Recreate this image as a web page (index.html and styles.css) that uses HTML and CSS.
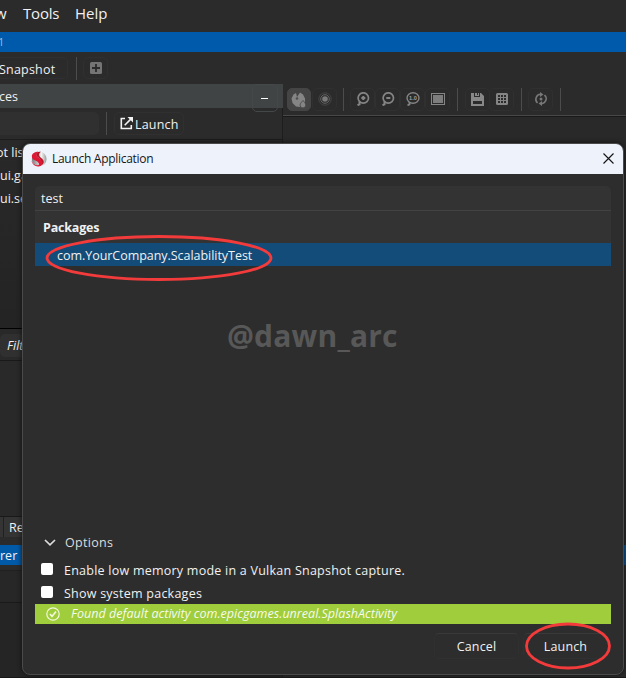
FILE: index.html
```html
<!DOCTYPE html>
<html lang="en">
<head>
<meta charset="utf-8">
<title>Launch Application</title>
<link rel="stylesheet" href="styles.css">
</head>
<body>
<div class="app">
  <nav class="menubar"><span class="menu-view">w</span><span class="menu-tools">Tools</span><span>Help</span></nav>
  <div class="titlebar">1</div>
  <div class="tabs">
    <div class="tab">Snapshot</div>
    <i class="divider"></i>
    <div class="add-tab"><svg width="12" height="12" viewBox="0 0 12 12"><rect width="12" height="12" rx="1.5" fill="#747474"/><path d="M6 2v8M2 6h8" stroke="#2b2b2b" stroke-width="1.8"/></svg></div>
  </div>
  <div class="workspace">
    <aside class="sidebar">
      <div class="panel-title"><span>ces</span><b class="minimize"></b></div>
      <div class="source-tools">
        <div class="source-input"></div><i class="divider"></i>
        <div class="source-launch"><svg width="13" height="13" viewBox="0 0 13 13" fill="none" stroke="#f4f4f4" stroke-width="1.6"><path d="M5 1.5H1.3v10h10V8"/><path d="M4.7 8.2 10.5 2.4"/><path d="M7.5 0H13v5.5z" fill="#f4f4f4" stroke="none"/></svg><span>Launch</span></div>
      </div>
      <div class="source-list"><div class="first">ot list</div><div>ui.ga</div><div>ui.se</div></div>
      <div class="filter"><span>Filter</span></div>
      <div class="filter-list"></div>
      <div class="subtabs"><i></i><span>Re</span></div>
      <div class="selection">rer</div>
      <div class="empty-row"></div>
      <div class="log"></div>
    </aside>
    <main class="viewer">
      <div class="toolbar">
        <div class="tool active"><svg width="16" height="16" viewBox="0 0 16 16"><path d="M2.500 2.500 5 1l1 4 3-4.500L12 2.500l2 4v5L9 15l-4-.5L1.500 11 .5 6.500z" fill="#858585"/><circle cx="6" cy="6.500" r="1.300" fill="#505050"/><path d="M12 8.500s-3 3-3 4.500a2.900 2.900 0 0 0 5.800 0c0-1.500-2.800-4.500-2.800-4.500z" fill="#858585" stroke="#454545" stroke-width=".8"/></svg></div>
        <div class="tool"><svg width="14" height="14" viewBox="0 0 14 14" fill="none" stroke="#4b4b4b"><circle cx="7" cy="7" r="6.2" stroke-width=".8"/><circle cx="7" cy="7" r="4.300" stroke="#656565"/><circle cx="7" cy="7" r="2.800" fill="#7a7a7a" stroke="none"/></svg></div>
        <i class="divider"></i>
        <div class="tool zoom-in"><svg width="14" height="14" viewBox="0 0 14 14" fill="none" stroke="#858585" stroke-width="1.7"><circle cx="7.300" cy="6" r="5.200"/><path d="M3.500 9.500v2.800l-2 .9M7.300 4v4M5.300 6h4" stroke-width="2"/></svg></div>
        <div class="tool"><svg width="14" height="14" viewBox="0 0 14 14" fill="none" stroke="#858585" stroke-width="1.7"><circle cx="7.300" cy="6" r="5.200"/><path d="M3.500 9.500v2.800l-2 .9M5.300 6h4" stroke-width="2"/></svg></div>
        <div class="tool"><svg width="14" height="14" viewBox="0 0 14 14" fill="none" stroke="#858585" stroke-width="1.4"><ellipse cx="7" cy="6" rx="6" ry="5.200"/><path d="M3.500 10v2.500l-2 .8" stroke-width="1.800"/><text class="zoom-label" x="3.100" y="8.100">1.0</text></svg></div>
        <div class="tool"><svg width="14" height="12" viewBox="0 0 14 12"><rect x=".5" y=".5" width="13" height="11" fill="none" stroke="#858585"/><rect x="2" y="2" width="10" height="8" fill="#7d7d7d"/></svg></div>
        <i class="divider fit-divider"></i>
        <div class="tool save"><svg width="13" height="13" viewBox="0 0 13 13"><path d="M0 0h3v4h6V0h1l3 3v10H0z" fill="#888"/><path d="M4 0h4v3H4z" fill="#888"/><path d="M6 0h1v2H6zM2 8h9v3H2z" fill="#2b2b2b"/></svg></div>
        <div class="tool"><svg width="12" height="12" viewBox="0 0 12 12"><rect width="12" height="12" rx="1.5" fill="#858585"/><path d="M2 2h2v2H2zM5 2h2v2H5zM8 2h2v2H8zM2 5h2v2H2zM5 5h2v2H5zM8 5h2v2H8zM2 8h2v2H2zM5 8h2v2H5zM8 8h2v2H8z" fill="#2b2b2b"/></svg></div>
        <i class="divider grid-divider"></i>
        <div class="tool refresh"><svg width="14" height="14" viewBox="0 0 14 14" fill="none" stroke="#777" stroke-width="1.6"><path d="M3.500 11A5 5 0 0 1 6.500 2.300M10.500 3A5 5 0 0 1 7.500 11.700"/><path d="M6 0l3.500 2.500L6 5zM8 14l-3.500-2.500L8 9z" fill="#777" stroke="none"/><circle cx="7" cy="7" r="1.500" fill="#777" stroke="none"/></svg></div>
        <i class="divider refresh-divider"></i>
      </div>
      <div class="canvas"></div>
      <div class="viewer-foot"></div>
    </main>
  </div>

  <section class="dialog">
    <header class="dialog-title">
      <svg class="logo" width="16" height="16" viewBox="0 0 16 16"><defs><linearGradient id="metal"><stop stop-color="#777"/><stop offset=".65" stop-color="#f2f2f2"/><stop offset="1" stop-color="#999"/></linearGradient></defs><circle cx="8.2" cy="8" r="7.4" fill="url(#metal)"/><path d="M10 .8C4.5.2 4 4 7 6.2c2.3 1.7 5 4.5 2 8.6 0 0 4.3-.8 3.7-4.5C12.300 7.300 8 6.500 8 3.500 8 2 10 .8 10 .8z" fill="#b91529"/><path d="M5 1C1 2 .2 5 1.200 7c1.500 3 6 2 7 6.500C5.500 16 1.200 12.500.4 9c.6 5 5 7.500 9.200 6C13 12.500 11 9 8 7 5 5.300 4.300 3.400 7 .6z" fill="#de1736"/></svg>
      <h1>Launch Application</h1>
      <svg class="close" width="11" height="11" viewBox="0 0 11 11"><path d="M.5.5l10 10M10.500.5l-10 10" stroke="#151515" stroke-width="1.150"/></svg>
    </header>
    <div class="dialog-body">
      <div class="search">test</div>
      <div class="packages">
        <h2>Packages</h2>
        <div class="package"><span>com.YourCompany.ScalabilityTest</span></div>
        <div class="watermark"><span>@dawn_arc</span></div>
      </div>
      <div class="options-head"><svg width="12" height="7" viewBox="0 0 12 7"><path d="M1 1l5 4.800L11 1" fill="none" stroke="#ddd" stroke-width="1.700"/></svg><span>Options</span></div>
      <div class="option"><i></i><span class="memory">Enable low memory mode in a Vulkan Snapshot capture.</span></div>
      <div class="option"><i></i><span class="system">Show system packages</span></div>
      <div class="status"><svg width="14" height="14" viewBox="0 0 14 14" fill="none" stroke="#f4f8df"><circle cx="7" cy="7" r="6.200" stroke-width="1.200"/><path d="M4 7l2 2.500L10 4.500" stroke-width="1.700"/></svg><span>Found default activity com.epicgames.unreal.SplashActivity</span></div>
      <footer><div class="button"><span>Cancel</span></div><div class="button"><span>Launch</span></div></footer>
    </div>
  </section>
  <svg class="mark package-mark" width="228" height="48" viewBox="0 0 228 48"><ellipse cx="114" cy="24" rx="112" ry="21.500"/></svg>
  <svg class="mark launch-mark" width="88" height="50" viewBox="0 0 88 50"><ellipse cx="44" cy="25" rx="41.500" ry="22"/></svg>
</div>
</body>
</html>
```
FILE: styles.css
```css
* { box-sizing: border-box; }
body { margin: 0; background: #2b2b2b; color: #f1f1f1; font: 12.5px/18px "Open Sans", "Noto Sans", sans-serif; }
span, h1, h2 { white-space: nowrap; }
svg { display: block; flex: none; }
.app { position: relative; display: flex; flex-direction: column; width: 626px; height: 678px; overflow: hidden; border-bottom: 1px solid #171717; }
.menubar { display: flex; height: 32px; padding-top: 2px; font-size: 15px; line-height: 22px; }
.menu-view { width: 28px; margin-left: -5px; }
.menu-tools { width: 52px; letter-spacing: -.2px; }
.titlebar { height: 20px; padding-right: 1px; background: #005aab; color: #99bddd; font-size: 11px; line-height: 20px; text-indent: -2px; }
.tabs { display: flex; height: 32px; padding-top: 5px; }
.tab { width: 68px; height: 22px; border: 1px solid #303030; border-left: 0; border-radius: 0 5px 5px 0; line-height: 24px; text-indent: -1px; letter-spacing: .2px; }
.divider { width: 1px; height: 23px; background: #4c4c4c; flex: none; }
.tab + .divider { margin-left: 8px; }
.add-tab { width: 25px; height: 22px; margin-left: 6px; padding: 4px 6px; border: 1px solid #303030; border-radius: 5px; }
.workspace { display: grid; grid-template-columns: 283px 1fr; height: 593px; }
.sidebar { display: flex; flex-direction: column; min-width: 0; border-right: 1px solid #1d1d1d; }
.panel-title { display: flex; justify-content: space-between; width: 283px; height: 24px; padding-right: 5px; background: #404444; line-height: 25px; text-indent: -1px; }
.minimize { width: 26px; height: 24px; border: 1px solid #454848; border-radius: 5px; padding: 13px 8px; }
.minimize::before { content: ""; display: block; width: 7px; height: 1px; background: #fff; }
.source-tools { display: flex; height: 31px; padding-top: 4px; }
.source-input { width: 99px; height: 23px; border-radius: 0 5px 5px 0; background: #303030; }
.source-tools .divider { margin-left: 7px; }
.source-launch { display: flex; width: 70px; height: 23px; margin-left: 7px; padding: 4px 5px; border: 1px solid #303030; border-radius: 5px; gap: 2px; }
.source-launch span { line-height: 16px; letter-spacing: .2px; }
.source-list { height: 189px; border-top: 1px solid #1d1d1d; background: linear-gradient(#292929, #242424); line-height: 23px; padding-top: 1px; }
.source-list .first { margin-left: -4px; }
.filter { height: 33px; padding: 5px 0 0; background: #292929; border-top: 1px solid #000; border-bottom: 1px solid #191919; font-style: italic; }
.filter span { display: block; height: 23px; padding-left: 7px; line-height: 23px; background: #303030; border-radius: 5px; }
.filter-list { height: 155px; background: linear-gradient(90deg, #292929, #252525); }
.subtabs { display: flex; height: 21px; border-top: 1px solid #191919; background: #343434; line-height: 22px; }
.subtabs i { width: 4px; border-right: 1px solid #202020; margin-right: 5px; }
.selection { height: 20px; margin-top: 8px; background: #005aa8; line-height: 21px; }
.empty-row { height: 33px; margin-top: 5px; border-top: 1px solid #202020; border-bottom: 1px solid #191919; background: #272727; }
.log { flex: 1; background: #252525; }
.viewer { display: flex; flex-direction: column; min-width: 0; }
.toolbar { display: flex; height: 32px; padding: 4px; border-bottom: 1px solid #484848; }
.tool { display: grid; place-items: center; width: 25px; height: 23px; border: 1px solid #303030; border-radius: 5px; flex: none; padding-bottom: 1px; }
.tool.active { width: 24px; background: #454545; border-color: #454545; margin-right: 1px; padding: 0; }
.tool + .divider { margin-left: 6px; }
.zoom-in { margin-left: 6px; }
.tool + .fit-divider { margin-left: 7px; }
.save { margin-left: 7px; }
.tool + .grid-divider { margin-left: 6px; }
.save + .tool { margin-left: -1px; margin-right: 1px; }
.refresh { margin-left: 6px; }
.tool + .refresh-divider { margin-left: 7px; }
.zoom-label { font: bold 5.5px "Liberation Sans", sans-serif; fill: #a0a0a0; stroke: none; }
.canvas { height: 429px; border-top: 1px solid #191919; background: #292929; }
.viewer-foot { height: 20px; background: #005aa8; }
.dialog { position: absolute; left: 22px; top: 143px; width: 602px; height: 532px; background: #2d2d2d; border: 1px solid #4a4a4a; border-radius: 8px; overflow: hidden; box-shadow: 0 0 5px #111; }
.dialog-title { display: flex; height: 30px; align-items: center; padding: 0 9px 0 8px; background: #eef3fb; color: #161616; }
.dialog-title h1 { margin: 0 auto 0 5px; font: 12px/18px "Open Sans", sans-serif; letter-spacing: -.29px; }
.close { margin-bottom: 2px; }
.dialog-body { padding: 12px 12px 0; }
.search { height: 25px; padding-left: 6px; border-bottom: 1px solid #424242; border-radius: 5px 5px 0 0; background: #333; line-height: 25px; }
.packages { height: 319px; }
.packages h2 { height: 32px; margin: 0; padding-left: 8px; background: #333; font-size: 12.5px; line-height: 33px; letter-spacing: -.2px; }
.package { height: 23px; padding-left: 22px; background: #134b79; line-height: 25px; letter-spacing: -.04px; }
.watermark { padding: 49px 0 0 192px; color: #585858; font: bold 30px/42px "Open Sans", sans-serif; letter-spacing: .2px; }
.options-head { display: flex; align-items: center; height: 28px; padding: 0 0 3px 9px; gap: 9px; color: #ddd; letter-spacing: .3px; }
.option { display: flex; height: 23px; padding-left: 6px; align-items: center; gap: 11px; letter-spacing: .24px; }
.option i { width: 12px; height: 12px; border-radius: 2px; background: #fff; margin-bottom: 2px; }
.option span { padding-top: 2px; }
.status { display: flex; align-items: center; height: 20px; padding-left: 11px; gap: 11px; background: #9fcd3b; color: #f7faed; font-style: italic; letter-spacing: .03px; }
footer { display: flex; justify-content: flex-end; gap: 4px; padding: 9px 3px 0 0; }
.button { width: 85px; height: 26px; border: 1px solid #303030; border-top-color: #393939; border-radius: 5px; text-align: center; line-height: 25px; letter-spacing: .15px; }
.mark { position: absolute; fill: none; stroke: #f43b3b; stroke-width: 2.8; }
.package-mark { left: 45px; top: 234px; }
.launch-mark { left: 524px; top: 621px; }
```
